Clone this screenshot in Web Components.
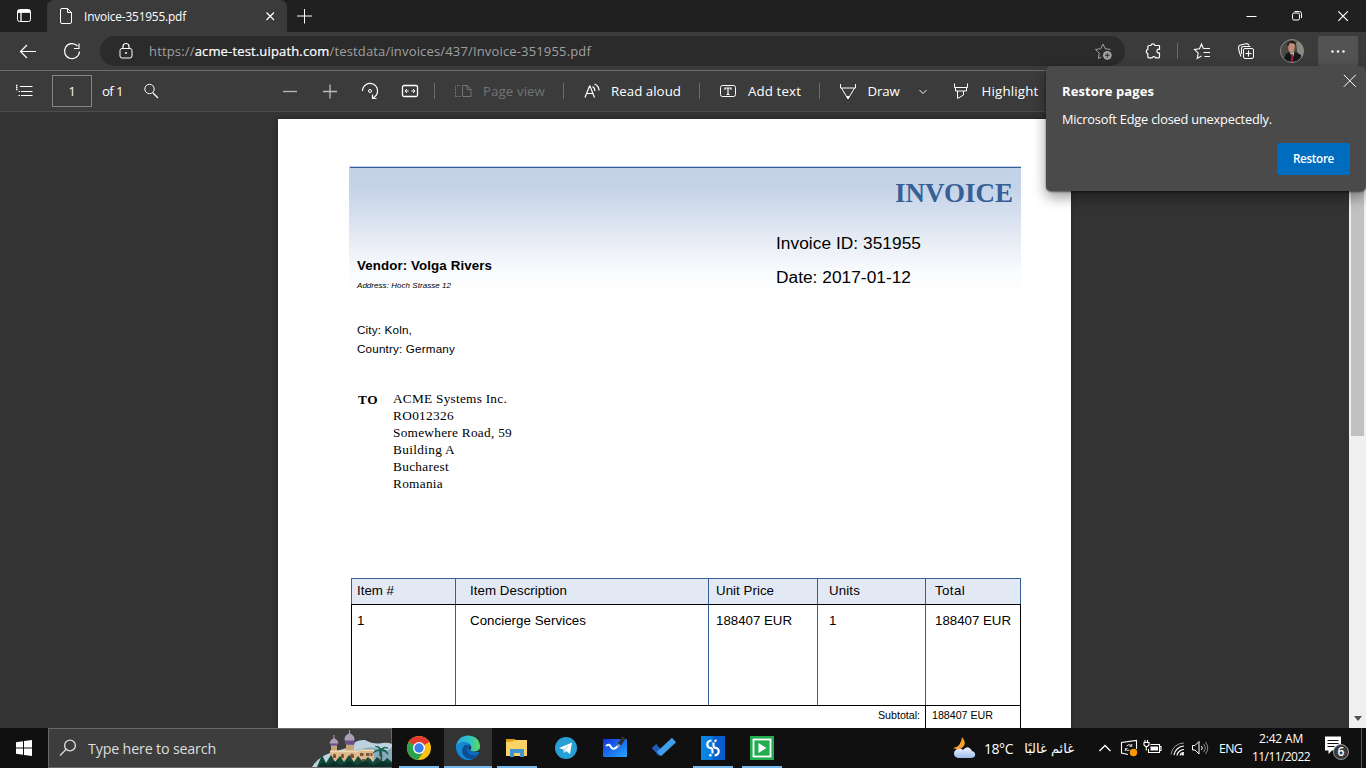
<!DOCTYPE html>
<html lang="en"><head><meta charset="utf-8"><title>Invoice-351955.pdf</title>
<style>
html,body{margin:0;height:768px;overflow:hidden;background:#333}
body{font-family:"Open Sans","Noto Sans",sans-serif;color:#fff}
</style></head><body>
<desktop-screen></desktop-screen>
<script>
const ICONS={
tabs:'<rect x="5.5" y="5.5" width="13" height="12" rx="2"/><path d="M5.5 8h13M9 8v9.500" stroke-width="1.3"/><path d="M6 7.200h12" stroke-width="2.400"/>',
doc:'<path d="M6.500 6q0-1.500 1.500-1.500h5.500l4 4V18q0 1.500-1.500 1.500H8q-1.500 0-1.500-1.500zM13.500 4.500v4h4"/>',
close:'<path d="M8.500 8.500l7.500 7.500M16 8.500L8.500 16" stroke-width="1.200"/>',
plus:'<path d="M12.500 5v14.500M5 12h15"/>',
min:'<path d="M7.500 12.500h10"/>',
restore:'<rect x="7.500" y="9" width="7" height="7" rx="1.500"/><path d="M9.500 7.500h5q2 0 2 2v4.500"/>',
winclose:'<path d="M7.300 7.300l9.500 9.500M16.800 7.300l-9.500 9.500" stroke-width="1.200"/>',
back:'<path d="M20 12.500H4.500M11 6l-6.500 6.500L11 19" stroke-width="1.200"/>',
reload:'<path d="M19.500 12.500a7.500 7.500 0 1 1-2-5.500M19 4.500v5h-5" stroke-width="1.200"/>',
lock:'<rect x="6" y="9.500" width="12" height="9.500" rx="2"/><path d="M9 9.500V7.500a3 3 0 0 1 6 0v2" stroke-width="1.200"/><circle cx="12" cy="14" r="1" fill="currentColor" stroke="none"/>',
staradd:'<path d="M19.500 10.500l-5.300-.8L12 5 9.800 9.700l-5.300.8 3.800 3.700-1 5.300 3-1.500" /><circle cx="16.300" cy="16.300" r="4.400" fill="currentColor" stroke="none"/><path d="M16.300 14v4.600M14 16.300h4.600" stroke="#2b2b2b"/>',
puzzle:'<path d="M8.200 6.500h1.600a2.200 2.200 0 0 1 4.200 0H18q.5 0 .5.500v3.200a2 2 0 1 0 0 3.800V18q0 .8-.8.800h-3a2 2 0 0 0-3.700 0H7.800q-1 0-1-1v-3.200a2.200 2.200 0 0 1 0-4.200V7.500q0-1 1.400-1z" stroke-width="1.200"/>',
fav:'<path d="M16 9.500l-2.800-.3L11.500 5 9.500 9.700l-5 .7 3.700 3.700-1 5.400 4.200-2.400M14.500 9.500H20M13.500 13.500H20M14.500 17.500H20" stroke-width="1.100"/>',
collect:'<rect x="9.500" y="9.500" width="10" height="10" rx="1.500"/><path d="M14.500 11.500v6M11.500 14.500h6M7 17.500q-2.300-5-2.500-9 0-2 2-2.500l5.500-1.300q2.500-.4 3 2M7.500 15V9q0-1.500 2-1.500h7" stroke-width="1.100"/>',
dots:'<g fill="currentColor" stroke="none"><circle cx="6.500" cy="12.500" r="1.200"/><circle cx="12" cy="12.500" r="1.200"/><circle cx="17.500" cy="12.500" r="1.200"/></g>',
list:'<path d="M8 7.500h12.500M9 12.500h11.500M9 16.500h11.500M6.500 12.500H8M6.500 16.500H8" stroke-width="1.200"/><path d="M4 6.500h1.500M4 8.500h1.500M4 10.500h1.500" stroke-width="1.300"/>',
search:'<circle cx="10.500" cy="10" r="4.700"/><path d="M14 14l5 5" stroke-width="1.300"/>',
minus:'<path d="M5 12.500h14" stroke="#bbb" stroke-width="1.300"/>',
zoomin:'<path d="M5 12.500h14M12 5.500v14" stroke="#bbb" stroke-width="1.300"/>',
rotate:'<path d="M4.500 12a7.500 7.500 0 1 1 12.500 5.500l-2 1.500M14.500 15.500v4h4" stroke-width="1.200"/><circle cx="12" cy="12" r="1.500"/>',
fit:'<rect x="4.500" y="6.500" width="15" height="11" rx="1.500" stroke-width="1.300"/><path d="M7 12h3.700M13.300 12H17M9 10l-2 2 2 2M15 10l2 2-2 2"/>',
pageview:'<path d="M4.500 17.500v-10q0-1 1-1h4M4.500 17.500h5" stroke-dasharray="2 1"/><path d="M11.500 6.500h5l3.500 4v7h-8.500zM16 6.500v4h4"/>',
read:'<path d="M5 18.500L9.500 7h.5l4.500 11.500M6.500 14.500h6.500M12.500 7.500q2.500 1.500 2.300 4.500M14.500 5q4.500 2 4.500 6.500" stroke-width="1.200"/>',
text:'<rect x="4.500" y="6.500" width="15" height="11" rx="2"/><path d="M8.500 9h7M12 9v7M10.500 15.500h3M9 8.700v2M15 8.700v2" stroke-width="1.200"/>',
draw:'<path d="M4.500 5v4h15V5M5.500 9l5 8.500h3l5-8.500"/><path d="M10.500 17.500h3L12 20z" fill="currentColor"/>',
chev:'<path d="M8.500 11l3.500 3.500 3.500-3.500"/>',
highlight:'<path d="M5.500 4.500v4h13v-4M6.500 8.500v3.500h11V8.500M8.500 12v7.500l6-3.500v-4"/>',
popclose:'<path d="M5.800 5.800l12 12M17.800 5.800l-12 12"/>',
find:'<circle cx="14" cy="9.500" r="5.400" stroke-width="1.300"/><path d="M10 13.500L4 19.500" stroke-width="1.300"/>',
start:'<path d="M4 6.300l7-1v6.200H4zm8-1.200l8-1.100v7.500h-8zM4 12.500h7v6.200l-7-1zm8 0h8V20l-8-1.100z" fill="#fff" stroke="none"/>',
chrome:'<g stroke="none"><circle cx="12" cy="12" r="12" fill="#fbc116"/><path d="M12 12L1.600 6A12 12 0 0 1 22.400 6z" fill="#e33b2e"/><path d="M1.600 6A12 12 0 0 0 11 24l6-9-5-3z" fill="#2ba24c"/><circle cx="12" cy="12" r="6" fill="#fff"/><circle cx="12" cy="12" r="4.700" fill="#3b7ded"/></g>',
edge:'<defs><linearGradient id="a"><stop stop-color="#2aa3e8"/><stop offset=".6" stop-color="#2fc6c2"/><stop offset="1" stop-color="#63d957"/></linearGradient></defs><g stroke="none"><circle cx="12" cy="12" r="12" fill="#0c69bd"/><path d="M0 11C1-4 23-4 24 10c0 5-5 7-9 5-2-1 1-2 0-5C13 5 3 5 0 11z" fill="url(#a)"/><path d="M0 12C2 6 9 5 13 8c-5-1-6 12 2 12 3 0 6-1 8-3-5 9-14 8-18 4-3-3-4-6-5-9z" fill="#1688d4"/><path d="M9 9c-6 5-2 14 6 14 3 0 6-2 8-5-6 3-12 1-12-4 0-2 1-3 2-4z" fill="#0c4f92"/><path d="M13 10c-1 3 1 6 5 6h6v-3c-3 3-7 3-9 2s1-2 0-5z" fill="#333"/></g>',
folder:'<g stroke="none"><path d="M1 3h9l2 3H1z" fill="#d99b13"/><path d="M1 6l8-1 2-1h11v16H1z" fill="#fbd264"/><path d="M5 21v-8h14v8h-4v-4H9v4z" fill="#3f94d4"/></g>',
telegram:'<g stroke="none"><circle cx="12" cy="12" r="11" fill="#269fd4"/><path d="M5 12l13-5.500L16 18l-4-3-2 2-.5-3.500z" fill="#fff"/><path d="M9.500 13.500L16 8.500 11 14l-1 3z" fill="#b5d8e9"/></g>',
white:'<defs><linearGradient id="b" x2="1" y2="1"><stop stop-color="#1034dc"/><stop offset="1" stop-color="#25a8ff"/></linearGradient></defs><rect y="3" width="24" height="18" rx="1" fill="url(#b)" stroke="none"/><path d="M3 10q3-3 5 1t7-1" stroke="#fff" stroke-width="2"/><path d="M16.500 8.500l4.500-7" stroke="#303030" stroke-width="4"/><path d="M15 11l1.500-2.500" stroke="#999" stroke-width="2"/>',
todo:'<path d="M2 10l7 8" stroke="#1f5dba" stroke-width="6"/><path d="M7 18L22 4" stroke="#409fec" stroke-width="6"/>',
uipath:'<defs><linearGradient id="c"><stop stop-color="#0a8ae6"/><stop offset=".5" stop-color="#0878dc"/><stop offset=".5" stop-color="#075cd0"/></linearGradient></defs><path fill="url(#c)" stroke="none" d="M0 0h24v24H0z"/><path d="M10.500 4.500Q6.300 5 6.300 8.500T11 12.300M13.500 19.500q4.200-.7 4.200-4.200T13 11.700M12.500 6.500v3q0 2 1.500 2.400M11.500 17.500v-3q0-2-1.500-2.400" stroke="#fff" stroke-width="2.200"/><circle cx="14.500" cy="4.800" r="1.300" fill="#fff" stroke="none"/><circle cx="9.300" cy="19.200" r="1.300" fill="#fff" stroke="none"/>',
play:'<path d="M0 0h24v24H0z" fill="#23ad51" stroke="none"/><rect x="3.500" y="3.500" width="17" height="17" stroke="#fff" stroke-width="1.800"/><path d="M8.500 7l8 5-8 5z" fill="#fff" stroke="none"/>',
weather:'<defs><linearGradient id="d" x2="0" y2="1"><stop stop-color="#eef2ff"/><stop offset="1" stop-color="#9fbbeb"/></linearGradient></defs><g stroke="none"><path d="M10 1q5 6 1 10t-10 1q8-1 9-11z" fill="#f5a128"/><path d="M7 22a4.500 4.500 0 0 1-1-9q4-1 5 1 5-6 9 1 4 1 3 5-1 2-4 2z" fill="url(#d)"/></g>',
up:'<path d="M6.500 15l5.500-5.500 5.500 5.500" stroke-width="1.300"/>',
sync:'<path d="M11 18.500L4.500 17V6.500L19.500 4.500V13" stroke-width="1.100"/><path d="M14.500 9.500q-2.500-2-5 .5M14.800 8v2.300h-2.300M8.500 13q1.500 2.500 4 1M8.300 15v-2.300h2.200" stroke-width=".9"/><circle cx="16.500" cy="16.500" r="3.700" fill="#ff9800" stroke="none"/>',
battery:'<path d="M9.500 8.500H18.500v8H7.500v-3.500M18.500 10.500H20v4h-1.500M4 4v2.500M6.500 4v2.500M3 6.500h5v2.500l-1.500 1.500H4.500L3 9zM5.300 10.500v4" stroke-width="1.100"/><path d="M9.500 10.500h7.500v4h-7.500z" fill="#fff" stroke="none"/>',
wifi:'<path d="M5 18.500A13 13 0 0 1 18 7" stroke="#999"/><path d="M8 19a10.500 10.500 0 0 1 10-9M11 19.500a7 7 0 0 1 7-6M14 19.500a4 4 0 0 1 4-3" stroke-width="1.200"/><circle cx="16.800" cy="18.300" r="1.200" fill="#fff" stroke="none"/>',
speaker:'<path d="M4.500 9.500h2.500l4-4v12.500l-4-4H4.500zM13.500 10q1.500 2 0 4"/><path d="M15.500 8q3.500 4 0 8M17.500 6q4.500 6 0 12" stroke="#888"/>',
note:'<path d="M1 .5h16v14H8L4.500 18v-3.500H1z" fill="#fff" stroke="none"/><path d="M3.500 4.500h11M3.500 7.500h11M3.500 10.500h7" stroke="#111"/>',
avatar:'<defs><clipPath id="e"><circle cx="12" cy="12" r="11.500"/></clipPath></defs><g clip-path="url(#e)" stroke="none"><path fill="#4a4944" d="M0 0h24v24H0z"/><path d="M16 3h8v16h-6z" fill="#8a8982"/><path d="M2 24l4-9 4-3 6 1 5 3v8z" fill="#15171c"/><path d="M8 4.500q3-3 7 1l-1 7-2.500 2-3-3z" fill="#c08d74"/><path d="M7 6q1-4.500 5.500-4 3.500.5 3.500 4.500l-2-2-4.500-.5L8.500 7z" fill="#211a18"/><path d="M9 12.500l3 2 2.500-2-1.500 6z" fill="#ccc"/><path d="M11.300 15h1.500l.7 9h-3z" fill="#8d1f31"/></g><circle cx="12" cy="12" r="11.500" stroke="#8a8a8a"/>'
};
const def=(name,css,html)=>{
  const t=document.createElement('template');t.innerHTML=`<style>${css}</style>${html}`;
  customElements.define(name,class extends HTMLElement{
    constructor(){super();this.attachShadow({mode:'open'}).append(t.content.cloneNode(true));}
  });
};
/* one glyph of the icon set, on a 24px grid */
customElements.define('ui-icon',class extends HTMLElement{
  constructor(){super();this.attachShadow({mode:'open'});}
  connectedCallback(){
    this.shadowRoot.innerHTML=`<style>:host{display:block;flex:none;width:24px;height:24px}svg{display:block;overflow:visible}</style>
    <svg width="24" height="24" viewBox="0 0 24 24" fill="none" stroke="currentColor">${ICONS[this.getAttribute('name')]}</svg>`;
  }
});
def('ui-sep',`:host{display:block;flex:none;width:1px;height:16px;background:#6a6a6a}`,'');

def('tab-strip',`:host{display:flex;height:32px;background:#202020;align-items:center;flex:none}
.tab{display:flex;align-items:center;box-sizing:border-box;width:240px;height:32px;margin-left:11px;padding-left:7px;background:#3b3b3b;border-radius:7px 7px 0 0;font-size:11.900px}
.tab fit-text{margin-left:6px;padding-bottom:1px}.tab ui-icon:last-child{margin:0 0 0 auto;margin-right:5px}
.new{margin-left:5px}.win{display:flex;gap:22px;margin-left:auto;margin-right:11px}`,
`<ui-icon name="tabs" style="margin-left:12px"></ui-icon><div class="tab"><ui-icon name="doc"></ui-icon><fit-text w="102">Invoice-351955.pdf</fit-text><ui-icon name="close"></ui-icon></div><ui-icon class="new" name="plus"></ui-icon>
<div class="win"><ui-icon name="min"></ui-icon><ui-icon name="restore"></ui-icon><ui-icon name="winclose"></ui-icon></div>`);

def('address-bar',`:host{display:flex;height:38px;background:#3b3b3b;align-items:center;flex:none}
.pill{display:flex;align-items:center;width:1025px;height:30px;border-radius:15px;background:#2b2b2b;margin-left:16px;box-sizing:border-box;padding:0 10px 0 14px;font-size:13px;color:#a0a0a0}
b{font-weight:400;color:#fff;-webkit-text-stroke:.2px #fff}.pill fit-text{margin-left:11px}.pill ui-icon:last-child{margin-left:auto}.pill ui-icon:first-child{color:#fff}
.more{display:grid;place-items:center;width:40px;height:30px;border-radius:2px;background:#525252;margin-left:14px}`,
`<ui-icon name="back" style="margin-left:16px"></ui-icon><ui-icon name="reload" style="margin-left:20px"></ui-icon>
<div class="pill"><ui-icon name="lock"></ui-icon><fit-text w="442">https://<b>acme-test.uipath.com</b>/testdata/invoices/437/Invoice-351955.pdf</fit-text><ui-icon name="staradd"></ui-icon></div>
<ui-icon name="puzzle" style="margin-left:16px"></ui-icon><ui-sep style="margin-left:12px"></ui-sep><ui-icon name="fav" style="margin-left:12px"></ui-icon><ui-icon name="collect" style="margin-left:20px"></ui-icon><ui-icon name="avatar" style="margin-left:22px"></ui-icon><div class="more"><ui-icon name="dots"></ui-icon></div>`);

def('pdf-toolbar',`:host{display:flex;height:42px;box-sizing:border-box;background:#3b3b3b;border-top:1px solid #6c6c6c;border-bottom:1px solid #4c4c4c;align-items:center;flex:none;font-size:13.300px}
.box{display:grid;place-items:center;box-sizing:border-box;width:40px;height:32px;border:1px solid #858585;margin-left:16px;font-size:12.500px}.off{color:#747474}`,
`<ui-icon name="list" style="margin-left:12px"></ui-icon><div class="box">1</div><fit-text w="21" style="margin-left:10px">of 1</fit-text><ui-icon name="search" style="margin-left:16px"></ui-icon>
<ui-icon name="minus" style="margin-left:115px"></ui-icon><ui-icon name="zoomin" style="margin-left:16px"></ui-icon><ui-icon name="rotate" style="margin-left:16px"></ui-icon><ui-icon name="fit" style="margin-left:16px"></ui-icon>
<ui-sep style="margin-left:12px"></ui-sep><ui-icon class="off" name="pageview" style="margin-left:16px"></ui-icon><fit-text class="off" w="62" style="margin-left:8px">Page view</fit-text>
<ui-sep style="margin-left:18px"></ui-sep><ui-icon name="read" style="margin-left:16px"></ui-icon><fit-text w="70" style="margin-left:7px">Read aloud</fit-text>
<ui-sep style="margin-left:18px"></ui-sep><ui-icon name="text" style="margin-left:16px"></ui-icon><fit-text w="53" style="margin-left:8px">Add text</fit-text>
<ui-sep style="margin-left:18px"></ui-sep><ui-icon name="draw" style="margin-left:16px"></ui-icon><fit-text w="32" style="margin-left:7.500px">Draw</fit-text><ui-icon name="chev" style="margin-left:11.500px"></ui-icon>
<ui-icon name="highlight" style="margin-left:14px"></ui-icon><fit-text w="57" style="margin-left:8.500px">Highlight</fit-text>`);

def('invoice-head',`:host{display:flex;justify-content:space-between;box-sizing:border-box;width:672px;height:130px;margin-left:71px;padding:11px 8px 0;color:#000;background:linear-gradient(#355f99,#355f99) 1px 1px/672px 1px no-repeat,linear-gradient(#c4d2e7 0,#c5d3e8 16%,#d6e0ee 38%,#e9eef6 60%,#f8fafc 80%,#fff 100%)}
.l{padding-top:79px}.v{font:bold 13.300px/20px "Liberation Sans",Arial,sans-serif}.a{font:italic 8px/10px "Liberation Sans",Arial,sans-serif;margin-top:5px}
.r{width:237px;font:17.300px/34px "Liberation Sans",Arial,sans-serif}.t{text-align:right;font:bold 27px/32px "Liberation Serif",serif;color:#365f97;margin-bottom:17px}`,
`<div class="l"><div class="v"><fit-text w="135">Vendor: Volga Rivers</fit-text></div><div class="a"><fit-text w="94">Address: Hoch Strasse 12</fit-text></div></div>
<div class="r"><div class="t"><fit-text w="118">INVOICE</fit-text></div><div><fit-text w="145">Invoice ID: 351955</fit-text></div><div><fit-text w="135">Date: 2017-01-12</fit-text></div></div>`);

def('invoice-parties',`:host{display:block;margin-left:79px;height:282px;color:#000;box-sizing:border-box;padding-top:24px}
.c{font:11.700px/19px "Liberation Sans",Arial,sans-serif}.to{display:flex;margin-top:32px;font:13.300px/17px "Liberation Serif",serif}.to b{width:36px;padding:1px 0 0 1px;box-sizing:border-box}`,
`<div class="c"><fit-text w="55">City: Koln,</fit-text><br><fit-text w="98">Country: Germany</fit-text></div>
<div class="to"><b><fit-text w="20">TO</fit-text></b><div><fit-text w="114">ACME Systems Inc.</fit-text><br><fit-text w="61">RO012326</fit-text><br><fit-text w="119">Somewhere Road, 59</fit-text><br><fit-text w="62">Building A</fit-text><br><fit-text w="56">Bucharest</fit-text><br><fit-text w="50">Romania</fit-text></div></div>`);

def('invoice-table',`:host{display:block;margin-left:73px;width:670px;color:#000;font:13.300px/16px "Liberation Sans",Arial,sans-serif}
.g{display:grid;grid-template-columns:105px 253px 109px 108px 95px;box-sizing:border-box}
.g>div{box-sizing:border-box;border-right:1px solid #365f97;white-space:nowrap}
.h{height:26px;border-top:1px solid #365f97;background:#e3e9f4}.h>div{padding-top:4px}.h>div:first-child{border-left:1px solid #365f97}
.b{height:102px;border-top:1px solid #000;border-bottom:1px solid #000}.b>div{padding-top:8px}.b>div:first-child{border-left:1px solid #000}.b>div:last-child{border-color:#000}
.g>div:nth-child(1){padding-left:5px}.g>div:nth-child(2){padding-left:14px}.g>div:nth-child(3){padding-left:7px}.g>div:nth-child(4){padding-left:11px}.g>div:nth-child(5){padding-left:9px}
.f{display:flex;font-size:10.700px;line-height:18px;justify-content:flex-end}.f .n{border:solid #000;border-width:0 1px;width:96px;height:30px;box-sizing:border-box;padding-left:6px;margin-left:5px}`,
`<div class="g h"><div><fit-text w="37">Item #</fit-text></div><div><fit-text w="97">Item Description</fit-text></div><div><fit-text w="58">Unit Price</fit-text></div><div><fit-text w="31">Units</fit-text></div><div><fit-text w="30">Total</fit-text></div></div>
<div class="g b"><div>1</div><div><fit-text w="116">Concierge Services</fit-text></div><div><fit-text w="76">188407 EUR</fit-text></div><div>1</div><div><fit-text w="76">188407 EUR</fit-text></div></div>
<div class="f"><fit-text w="42">Subtotal:</fit-text><div class="n"><fit-text w="61">188407 EUR</fit-text></div></div>`);

def('pdf-view',`:host{display:flex;justify-content:space-between;height:616px;background:#333;flex:none;overflow:hidden}
.page{margin:7px 0 0 278px;width:793px;height:610px;box-sizing:border-box;padding-top:47px;background:#fff;box-shadow:0 0 4px #222}
.bar{width:17px;background:#f0f0f0;display:flex;flex-direction:column;align-items:center;justify-content:space-between}
.thumb{width:13px;height:324px;background:#c1c1c1}.arrow{border:4px solid transparent;border-top:5px solid #505050;border-bottom:0;margin-bottom:7px}`,
`<div class="page"><invoice-head></invoice-head><invoice-parties></invoice-parties><invoice-table></invoice-table></div>
<div class="bar"><div class="thumb"></div><div class="arrow"></div></div>`);

def('restore-popup',`:host{position:absolute;left:1046px;top:66px;width:320px;height:125px;box-sizing:border-box;background:#4a4a4a;border-radius:5px;box-shadow:0 1px 2px #0008,0 6px 14px #0006;padding:16px}
.h{display:flex;justify-content:space-between;height:18px;font:bold 13px/18px "Open Sans",sans-serif}.h ui-icon{margin:-13px -12px 0 0}
.m{margin-top:10px;font-size:12.800px;line-height:18px}.f{display:flex;justify-content:flex-end;margin-top:15px}
.b{display:grid;place-items:center;width:73px;height:32px;box-sizing:border-box;padding-bottom:2px;background:#006cbe;border-radius:2px;font-weight:600;font-size:11.700px}`,
`<div class="h"><fit-text w="92">Restore pages</fit-text><ui-icon name="popclose"></ui-icon></div><div class="m"><fit-text w="210">Microsoft Edge closed unexpectedly.</fit-text></div><div class="f"><div class="b"><fit-text w="41">Restore</fit-text></div></div>`);

def('castle-art',`:host{display:block;width:80px;height:38px}svg{display:block}`,
`<svg width="80" height="38" viewBox="0 0 80 38"><path d="M0 38Q6 28 18 24L38 18Q44 10 53 11Q62 16 70 14Q76 13 80 15V38z" fill="#bcd3df"/><path d="M42 22Q58 16 66 20T80 18V38H42z" fill="#86a9bb"/>
<path d="M19 15h6v10h-6zM34 14h8v12h-8z" fill="#8a76a0"/><path d="M18 15q-1.500-3 4-6q5.500 3 4 6zM33 12q-2-5 4.500-8q6.500 3 4.500 8z" fill="#aba0b5"/><path d="M37.500 1v4M22 6v4" stroke="#aba0b5"/><path d="M18 14.500h8v1.500h-8zM33 11.500h9.500v4H33z" fill="#6b4f8c"/>
<path d="M19 17h6v6h-6zM34 16h8v7h-8z" fill="#c9a679"/><path d="M18 22h29v12H18zM47 21h15v13H47z" fill="#dcb98b"/><path d="M18 21.500h29v1.800H18zM47 20.500h15V22H47z" fill="#efd8b0"/><path d="M21 29v-3q1.500-3 3 0v3zM29 29v-3q1.500-3 3 0v3zM38 29v-3q2-3 4 0v3zM48 24h3.500v3H48zM54 24h3.500v3H54zM58.500 24h2v3h-2zM50 33v-3h3v3zM56 33v-3h3v3z" fill="#7d5538"/>
<path d="M5 38l5-12 4 8 5-8 4 7 5-6 4 6 5-7 5 7 4-6 5 6 5-5 5 5 4-5 6 5 4-4 5 4v5z" fill="#12483a"/><path d="M6 38l5-5 5 3 6-4 7 4 8-4 8 4 8-4 8 4 9-4 10 3v3z" fill="#0b3029"/><path d="M69 33q1.500-6-.5-12" stroke="#3b4632" stroke-width="1.500" fill="none"/><path d="M61 24q3-4 7-3-2-4-5-3.500 4-1 6 2.500 3-3 7-1-4-1-6 1.500 5 0 6 5-3-4-7-4 1 3-1 6 0-4-1-6-3 0-6 2.500z" fill="#17604b" stroke="#17604b" stroke-width=".8"/></svg>`);

def('task-app',`:host{display:flex;flex-direction:column;align-items:center;width:48px;height:40px;--w:40px}:host([active]){background:#333;--w:48px}
.i{height:38px;display:flex;align-items:center;padding-top:1px;box-sizing:border-box}.u{height:2px;width:var(--w)}:host([open]) .u{background:#76b9ed}`,
`<div class="i"><slot></slot></div><div class="u"></div>`);

def('task-bar',`:host{display:flex;height:40px;background:#101010;align-items:center;flex:none;color:#fff;font-size:12.300px}
.s{display:flex;align-items:center;box-sizing:border-box;width:344px;height:40px;margin-left:12px;background:#3d3d3d;border:1px solid #686868;padding-left:7px;color:#dedede;font-size:14.300px}
.s castle-art{margin-left:auto;margin-right:-1px}.apps{display:flex;gap:1px;margin-left:3px}
.tray{display:flex;align-items:center;margin-left:auto;height:40px}.temp{font-size:14px}
.ar{font:13px/20px "DejaVu Sans","Noto Sans",sans-serif;direction:rtl;width:53px;white-space:nowrap;margin:2px 2px 0 8px}
.clock{display:flex;flex-direction:column;align-items:center;width:58px;line-height:18px;margin-left:10px;font-size:12px;padding-bottom:1px}
.n{position:relative;width:24px;height:24px;margin-left:14px}.bd{position:absolute;left:9px;top:8px;width:14px;height:14px;border:1px solid #999;border-radius:50%;background:#3a3a3a;font:600 12px/14px "Open Sans",sans-serif;text-align:center}
.end{width:1px;height:40px;background:#555;margin:0 4px 0 13px}`,
`<ui-icon name="start" style="margin-left:12px"></ui-icon><div class="s"><ui-icon name="find"></ui-icon><fit-text w="128" style="margin-left:8px">Type here to search</fit-text><castle-art></castle-art></div>
<div class="apps"><task-app open><ui-icon name="chrome"></ui-icon></task-app><task-app open active><ui-icon name="edge"></ui-icon></task-app><task-app open><ui-icon name="folder"></ui-icon></task-app><task-app><ui-icon name="telegram"></ui-icon></task-app><task-app><ui-icon name="white"></ui-icon></task-app><task-app><ui-icon name="todo"></ui-icon></task-app><task-app open><ui-icon name="uipath"></ui-icon></task-app><task-app open><ui-icon name="play"></ui-icon></task-app></div>
<div class="tray"><ui-icon name="weather"></ui-icon><fit-text class="temp" w="29" style="margin-left:8px">18°C</fit-text><span class="ar">غائم غالبًا</span>
<ui-icon name="up" style="margin-left:17px"></ui-icon><ui-icon name="sync"></ui-icon><ui-icon name="battery"></ui-icon><ui-icon name="wifi" style="margin-left:1px"></ui-icon><ui-icon name="speaker" style="margin-left:-2px"></ui-icon><fit-text w="23" style="margin-left:7px">ENG</fit-text>
<div class="clock"><fit-text w="44">2:42 AM</fit-text><fit-text w="58">11/11/2022</fit-text></div><div class="n"><ui-icon name="note"></ui-icon><div class="bd">6</div></div><div class="end"></div></div>`);

def('desktop-screen',`:host{display:flex;flex-direction:column;position:relative;width:1366px;height:768px;overflow:hidden}`,
`<tab-strip></tab-strip><address-bar></address-bar><pdf-toolbar></pdf-toolbar><pdf-view></pdf-view><task-bar></task-bar><restore-popup></restore-popup>`);

/* text tracked so that a run takes exactly w pixels */
customElements.define('fit-text',class extends HTMLElement{
  constructor(){super();this.attachShadow({mode:'open'}).innerHTML='<style>:host{display:inline-block;flex:none;white-space:pre;text-align:left;vertical-align:top}</style><span><slot></slot></span>';}
  connectedCallback(){
    const w=+this.getAttribute('w'),s=this.shadowRoot.querySelector('span');
    const d=(w-s.getBoundingClientRect().width)/this.textContent.length;
    s.style.letterSpacing=d+'px';this.style.width=w+'px';
  }
});
</script></body></html>
